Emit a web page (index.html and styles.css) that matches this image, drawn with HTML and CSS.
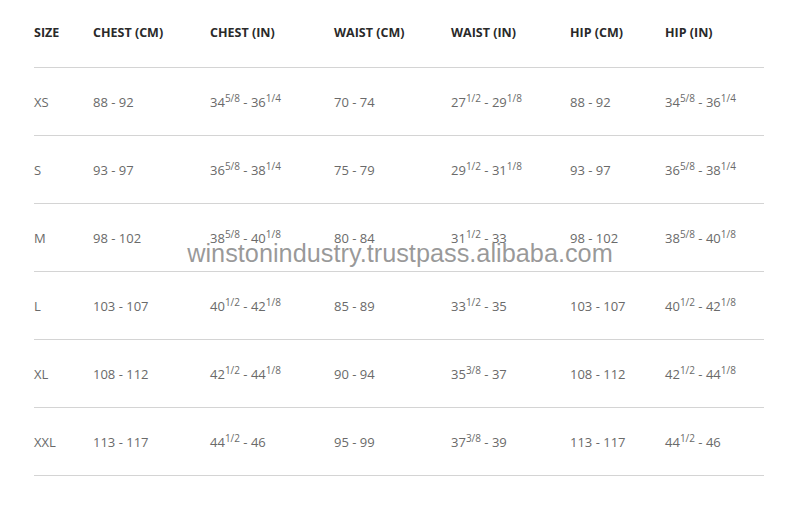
FILE: index.html
```html
<!DOCTYPE html>
<html>
<head>
<meta charset="utf-8">
<link rel="stylesheet" href="styles.css">
</head>
<body>
<div class="page">
  <div class="table">
    <div class="row head">
      <div>SIZE</div><div>CHEST (CM)</div><div>CHEST (IN)</div><div>WAIST (CM)</div><div>WAIST (IN)</div><div>HIP (CM)</div><div>HIP (IN)</div>
    </div>
    <div class="row">
      <div>XS</div><div>88 - 92</div><div>34<sup>5/8</sup> - 36<sup>1/4</sup></div><div>70 - 74</div><div>27<sup>1/2</sup> - 29<sup>1/8</sup></div><div>88 - 92</div><div>34<sup>5/8</sup> - 36<sup>1/4</sup></div>
    </div>
    <div class="row">
      <div>S</div><div>93 - 97</div><div>36<sup>5/8</sup> - 38<sup>1/4</sup></div><div>75 - 79</div><div>29<sup>1/2</sup> - 31<sup>1/8</sup></div><div>93 - 97</div><div>36<sup>5/8</sup> - 38<sup>1/4</sup></div>
    </div>
    <div class="row">
      <div>M</div><div>98 - 102</div><div>38<sup>5/8</sup> - 40<sup>1/8</sup></div><div>80 - 84</div><div>31<sup>1/2</sup> - 33</div><div>98 - 102</div><div>38<sup>5/8</sup> - 40<sup>1/8</sup></div>
    </div>
    <div class="row">
      <div>L</div><div>103 - 107</div><div>40<sup>1/2</sup> - 42<sup>1/8</sup></div><div>85 - 89</div><div>33<sup>1/2</sup> - 35</div><div>103 - 107</div><div>40<sup>1/2</sup> - 42<sup>1/8</sup></div>
    </div>
    <div class="row">
      <div>XL</div><div>108 - 112</div><div>42<sup>1/2</sup> - 44<sup>1/8</sup></div><div>90 - 94</div><div>35<sup>3/8</sup> - 37</div><div>108 - 112</div><div>42<sup>1/2</sup> - 44<sup>1/8</sup></div>
    </div>
    <div class="row">
      <div>XXL</div><div>113 - 117</div><div>44<sup>1/2</sup> - 46</div><div>95 - 99</div><div>37<sup>3/8</sup> - 39</div><div>113 - 117</div><div>44<sup>1/2</sup> - 46</div>
    </div>
  </div>
  <div class="watermark">winstonindustry.trustpass.alibaba.com</div>
</div>
</body>
</html>
```
FILE: styles.css
```css
html, body {
  margin: 0;
  padding: 0;
  background: #ffffff;
}
.page {
  position: relative;
  width: 800px;
  height: 513px;
  overflow: hidden;
}
.table {
  margin-left: 34px;
  width: 730px;
  font-family: "Open Sans", "Liberation Sans", sans-serif;
}
.row {
  display: grid;
  grid-template-columns: 59px 117px 124px 117px 119px 95px 99px;
  height: 67px;
  align-items: center;
  border-bottom: 1px solid #d4d4d4;
  font-size: 13px;
  color: #6a6a6a;
}
.row.head {
  font-weight: 700;
  color: #2a2a2a;
  font-size: 12.5px;
  align-items: start;
  padding-top: 24px;
  height: 43px;
}
sup {
  font-size: 10px;
  line-height: 0;
  vertical-align: 5px;
}
.watermark {
  position: absolute;
  left: 0;
  right: 0;
  top: 239px;
  text-align: center;
  font-family: "Liberation Sans", Arial, sans-serif;
  font-size: 25.3px;
  color: rgba(120, 120, 120, 0.75);
}
```
